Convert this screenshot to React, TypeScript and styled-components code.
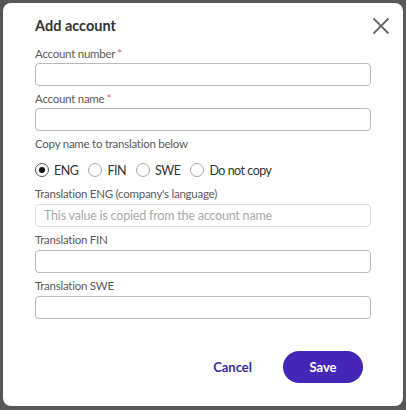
import React, { useState } from 'react'
import styled, { createGlobalStyle } from 'styled-components'

const GlobalStyle = createGlobalStyle`
  html, body {
    margin: 0;
    padding: 0;
    background: #575757;
    font-family: Lato, 'Liberation Sans', sans-serif;
  }
  * {
    box-sizing: border-box;
  }
`

const Backdrop = styled.div`
  width: 406px;
  height: 410px;
  padding: 3px 3px 4px 3px;
`

const Dialog = styled.div`
  position: relative;
  width: 400px;
  height: 403px;
  background: #fff;
  border-radius: 8px;
  padding: 13px 32px 0 32px;
  display: flex;
  flex-direction: column;
`

const Title = styled.h2`
  margin: 0 0 10px 0;
  font-size: 14.5px;
  line-height: 20px;
  font-weight: 700;
  color: #333;
`

const CloseButton = styled.button`
  position: absolute;
  top: 14px;
  right: 13px;
  width: 18px;
  height: 18px;
  padding: 0;
  border: none;
  background: none;
  cursor: pointer;
  color: #666;
`

const Field = styled.div`
  display: flex;
  flex-direction: column;
  margin-bottom: 5px;
`

const Label = styled.label<{ $gap?: number }>`
  font-size: 11.5px;
  line-height: 16px;
  color: #5a5a5a;
  margin-bottom: ${(p) => p.$gap ?? 1}px;
  letter-spacing: -0.25px;

  span {
    color: #e0606b;
    margin-left: 2px;
  }
`

const Input = styled.input`
  height: 23px;
  width: 100%;
  border: 1px solid #b8b8b8;
  border-radius: 4px;
  padding: 0 8px;
  font-family: inherit;
  font-size: 12.5px;
  letter-spacing: -0.2px;
  color: #333;
  background: #fff;
  outline: none;

  &:disabled {
    border-color: #dedede;
    background: #fff;
  }

  &::placeholder {
    color: #aaa;
  }
`

const RadioGroup = styled.div`
  display: flex;
  align-items: center;
  gap: 10px;
  height: 20px;
  margin: 8px 0 6px 0;
`

const RadioOption = styled.label`
  display: flex;
  align-items: center;
  gap: 5px;
  font-size: 12.5px;
  color: #333;
  cursor: pointer;
  letter-spacing: -0.5px;
`

const RadioCircle = styled.span<{ $checked: boolean }>`
  width: 14px;
  height: 14px;
  border-radius: 50%;
  border: 1px solid ${(p) => (p.$checked ? '#555' : '#a8a8a8')};
  display: flex;
  align-items: center;
  justify-content: center;

  &::after {
    content: '';
    width: 6px;
    height: 6px;
    border-radius: 50%;
    background: ${(p) => (p.$checked ? '#111' : 'transparent')};
  }
`

const Footer = styled.div`
  display: flex;
  justify-content: flex-end;
  align-items: center;
  gap: 15px;
  margin-top: 27px;
  padding-right: 8px;
`

const TextButton = styled.button`
  background: none;
  border: none;
  padding: 0 16px;
  height: 32px;
  font-family: inherit;
  font-size: 13px;
  font-weight: 700;
  color: #3b2a9e;
  cursor: pointer;
`

const PrimaryButton = styled.button`
  width: 80px;
  height: 32px;
  border: none;
  border-radius: 16px;
  background: #4527b8;
  color: #fff;
  font-family: inherit;
  font-size: 13px;
  font-weight: 700;
  cursor: pointer;
`

const options = ['ENG', 'FIN', 'SWE', 'Do not copy']

const App = (): JSX.Element => {
  const [copyTo, setCopyTo] = useState('ENG')

  return (
    <>
      <GlobalStyle />
      <Backdrop>
        <Dialog>
          <Title>Add account</Title>
          <CloseButton aria-label="Close">
            <svg width="18" height="18" viewBox="0 0 18 18">
              <path
                d="M1.5 1.5 L16.5 16.5 M16.5 1.5 L1.5 16.5"
                stroke="currentColor"
                strokeWidth="1.8"
                fill="none"
              />
            </svg>
          </CloseButton>

          <Field>
            <Label>
              Account number<span>*</span>
            </Label>
            <Input />
          </Field>
          <Field>
            <Label>
              Account name<span>*</span>
            </Label>
            <Input />
          </Field>

          <Label $gap={0}>Copy name to translation below</Label>
          <RadioGroup>
            {options.map((o) => (
              <RadioOption
                key={o}
                onClick={() => {
                  setCopyTo(o)
                }}
              >
                <RadioCircle $checked={copyTo === o} />
                {o}
              </RadioOption>
            ))}
          </RadioGroup>

          <Field>
            <Label $gap={2}>Translation ENG (company's language)</Label>
            <Input disabled placeholder="This value is copied from the account name" />
          </Field>
          <Field>
            <Label $gap={2}>Translation FIN</Label>
            <Input />
          </Field>
          <Field>
            <Label $gap={2}>Translation SWE</Label>
            <Input />
          </Field>

          <Footer>
            <TextButton>Cancel</TextButton>
            <PrimaryButton>Save</PrimaryButton>
          </Footer>
        </Dialog>
      </Backdrop>
    </>
  )
}

export default App
